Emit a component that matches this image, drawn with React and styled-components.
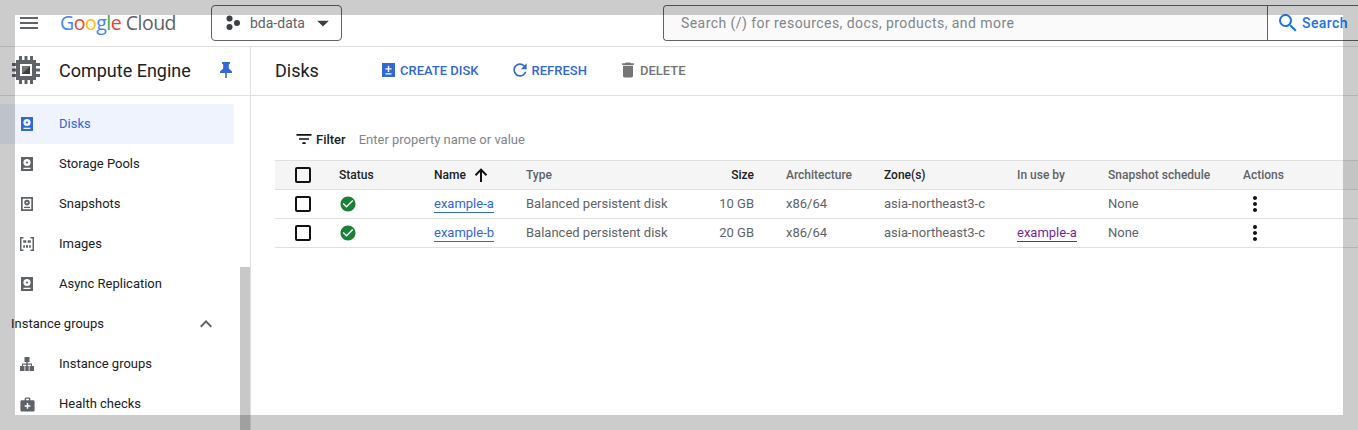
import React from "react"
import styled, { createGlobalStyle } from "styled-components"
import {
  MdMenu, MdRefresh, MdDelete, MdFilterList,
  MdCheckCircle, MdMoreVert, MdSearch, MdArrowDropDown, MdExpandLess, MdMedicalServices,
} from "react-icons/md"

const blue = "#3367d6"
const grey = "#5f6368"
const line = "#e0e0e0"

const Global = createGlobalStyle`
  html, body { margin: 0; background: #fff; height: 430px; overflow: hidden; }
  * { box-sizing: border-box; }
  #root { height: 430px; }
`

const Page = styled.div`
  position: relative;
  width: 1358px;
  height: 430px;
  overflow: hidden;
  font-family: Roboto, "Liberation Sans", sans-serif;
  font-size: 13px;
  color: #202124;
  background: #fff;
`

const Dim = styled.div`
  position: absolute;
  left: 15px;
  top: 15px;
  width: 1328px;
  height: 400px;
  box-shadow: 0 0 0 1400px rgba(0, 0, 0, 0.2);
  pointer-events: none;
`

const Topbar = styled.header`
  height: 47px;
  display: flex;
  align-items: center;
  border-bottom: 1px solid ${line};
  padding-left: 17px;
`

const MenuBtn = styled.div`
  width: 24px;
  height: 24px;
  margin-right: 19px;
  color: ${grey};
  svg { display: block; }
`

const Logo = styled.div`
  width: 151px;
  font-family: "Open Sans", Roboto, sans-serif;
  font-size: 19.5px;
  letter-spacing: -0.5px;
  color: ${grey};
  white-space: nowrap;
  margin-top: -1px;
`

const Letter = styled.span`
  color: ${({ $c }) => $c};
`

const ProjectBtn = styled.div`
  width: 131px;
  height: 36px;
  margin-top: -1px;
  border: 1px solid ${grey};
  border-radius: 4px;
  display: flex;
  align-items: center;
  padding-left: 13px;
  gap: 9px;
  font-size: 14px;
  color: ${grey};
  margin-right: 321px;
`

const SearchBox = styled.div`
  flex: 1;
  height: 36px;
  margin-top: -1px;
  margin-right: -2px;
  display: flex;
  border: 1px solid ${grey};
  border-right: none;
  border-radius: 4px 0 0 4px;
`

const SearchInput = styled.div`
  width: 603px;
  padding-left: 17px;
  line-height: 34px;
  font-size: 14px;
  letter-spacing: 0.44px;
  background: #fafafa;
  color: #80868b;
  border-radius: 4px 0 0 4px;
`

const SearchBtn = styled.div`
  flex: 1;
  display: flex;
  align-items: center;
  gap: 2px;
  padding-left: 8px;
  border-left: 1px solid ${grey};
  color: #1a73e8;
  font-size: 14px;
  font-weight: 500;
  letter-spacing: 0.4px;
`

const Body = styled.div`
  display: flex;
  height: 383px;
`

const Sidebar = styled.aside`
  width: 251px;
  flex-shrink: 0;
  border-right: 1px solid ${line};
  display: flex;
  flex-direction: column;
`

const SideTitle = styled.div`
  height: 49px;
  flex-shrink: 0;
  display: flex;
  align-items: center;
  padding: 0 0 2px 11px;
  border-bottom: 1px solid ${line};
  font-size: 18px;
  color: #202124;
`

const TitleText = styled.span`
  margin-left: 18px;
  width: 161px;
`

const SideBody = styled.div`
  flex: 1;
  display: flex;
  min-height: 0;
`

const NavList = styled.nav`
  width: 240px;
  padding: 8px 6px 0 0;
  overflow: hidden;
`

const NavItem = styled.div`
  height: 40px;
  display: flex;
  align-items: center;
  padding-left: 18px;
  gap: 23px;
  background: ${({ $active }) => ($active ? "#eef3fe" : "transparent")};
  color: ${({ $active }) => ($active ? blue : "#202124")};
`

const IconSlot = styled.span`
  width: 18px;
  display: flex;
  justify-content: center;
  flex-shrink: 0;
  color: ${({ $active }) => ($active ? blue : grey)};
  svg { display: block; }
`

const NavLabel = styled.span`
  padding-bottom: 2px;
`

const GroupHead = styled.div`
  height: 40px;
  display: flex;
  align-items: center;
  justify-content: space-between;
  padding: 0 16px 0 11px;
  color: #202124;
  svg { display: block; color: ${grey}; }
`

const ScrollTrack = styled.div`
  width: 10px;
  padding-top: 171px;
`

const ScrollThumb = styled.div`
  height: 200px;
  background: #c8c8c8;
`

const Main = styled.main`
  flex: 1;
  min-width: 0;
`

const ActionBar = styled.div`
  height: 49px;
  display: flex;
  align-items: center;
  padding: 0 0 2px 24px;
  border-bottom: 1px solid ${line};
`

const PageTitle = styled.h1`
  margin: 0;
  width: 105px;
  font-size: 18px;
  font-weight: 400;
  color: #202124;
`

const ActionBtn = styled.div`
  display: flex;
  align-items: center;
  gap: 2px;
  margin-right: 31px;
  font-size: 13px;
  font-weight: 500;
  color: ${({ $off }) => ($off ? "#757575" : blue)};
  svg { display: block; }
`

const FilterRow = styled.div`
  height: 41px;
  margin-top: 23px;
  padding: 0 0 1px 43px;
  display: flex;
  align-items: center;
  svg { display: block; margin-right: 2px; }
`

const FilterLabel = styled.span`
  font-weight: 500;
  font-size: 13px;
  color: #202124;
  margin-right: 13px;
`

const FilterHint = styled.span`
  font-size: 13px;
  color: #80868b;
`

const Table = styled.div`
  margin-left: 24px;
  border-top: 1px solid ${line};
`

const Row = styled.div`
  display: grid;
  grid-template-columns: 64px 95px 92px 160px 68px 32px 98px 133px 91px 135px 1fr;
  height: 29px;
  align-items: center;
  border-bottom: 1px solid ${line};
  background: ${({ $head }) => ($head ? "#f5f5f5" : "transparent")};
`

const HeadCell = styled.div`
  font-size: 12px;
  font-weight: 500;
  color: ${({ $dark }) => ($dark ? "#202124" : grey)};
  display: flex;
  align-items: center;
  justify-content: ${({ $right }) => ($right ? "flex-end" : "flex-start")};
  gap: 8px;
  svg { display: block; }
`

const Cell = styled.div`
  font-size: 13px;
  color: ${grey};
  padding-bottom: 2px;
  text-align: ${({ $right }) => ($right ? "right" : "left")};
  white-space: nowrap;
`

const IconCell = styled.div`
  svg { display: block; }
`

const Box = styled.div`
  width: 16px;
  height: 16px;
  margin-left: 20px;
  border: 2px solid #111;
  border-radius: 2px;
`

const Link = styled.a`
  color: ${({ $visited }) => ($visited ? "#7b1fa2" : blue)};
  border-bottom: 1px solid currentColor;
  padding-bottom: 1px;
`

const DiskIcon = ({ fill }) => (
  <svg width="12" height="14" viewBox="0 0 12 14">
    <path fill={fill} fillRule="evenodd" d="M0 0h12v14H0zM6 1.9a3.6 3.6 0 1 0 0 7.2 3.6 3.6 0 0 0 0-7.2zM6 4.4a1.1 1.1 0 1 1 0 2.2 1.1 1.1 0 0 1 0-2.2zM2.5 10.8v1.2h7v-1.2z" />
  </svg>
)

const SnapshotIcon = () => (
  <svg width="12" height="14" viewBox="0 0 12 14">
    <path fill={grey} fillRule="evenodd" d="M0 0h12v14H0zM1.7 1.7v10.6h8.6V1.7zM6 2.8a2.8 2.8 0 1 1 0 5.6 2.8 2.8 0 0 1 0-5.6zM6 4.7a.9.9 0 1 0 0 1.8.9.9 0 0 0 0-1.8zM3 9.7h6v1.2H3z" />
  </svg>
)

const ImagesIcon = () => (
  <svg width="14" height="14" viewBox="0 0 14 14" fill={grey}>
    <path d="M0 0h3.5v1.5H1.5v11h2V14H0zM14 0h-3.5v1.5h2v11h-2V14H14z" />
    <path d="M3.2 3.2h3.1v2.6H3.2zM7.7 3.2h3.1v2.6H7.7zM3.2 8.2h1.7v2.6H3.2zM6 8.2h2v2.6H6zM9.1 8.2h1.7v2.6H9.1z" />
  </svg>
)

const GroupIcon = () => (
  <svg width="14" height="14" viewBox="0 0 14 14" fill={grey}>
    <path d="M4.5 0h5v5H7.7v1.6H12V9h2v5H9.5V9H11V7.8H7.7V9h1v5H5.3V9h1V7.8H3V9h1.5v5H0V9h2V6.6h4.3V5H4.5z" />
  </svg>
)

const ChipIcon = () => (
  <svg width="30" height="30" viewBox="0 0 30 30" style={{ display: "block", flexShrink: 0 }}>
    <path fill={grey} fillRule="evenodd" d="M5 5h20v20H5zM9 9v12h12V9z" />
    <path fill={grey} d="M8 1h3v4H8zM13.5 1h3v4h-3zM19 1h3v4h-3zM8 25h3v4H8zM13.5 25h3v4h-3zM19 25h3v4h-3zM1 8h4v3H1zM1 13.5h4v3H1zM1 19h4v3H1zM25 8h4v3h-4zM25 13.5h4v3h-4zM25 19h4v3h-4z" />
    <path fill="#3c4043" d="M11 11h8v8h-8z" />
    <path fill="#757575" d="M11 11h8l-8 8z" />
  </svg>
)

const PinIcon = () => (
  <svg width="12" height="16" viewBox="0 0 12 16" fill={blue} style={{ flexShrink: 0 }}>
    <path d="M2 0h8v1.6L8.8 2.6V6.5L12 9.5V11H6.8v5H5.2v-5H0V9.5L3.2 6.5V2.6L2 1.6z" />
  </svg>
)

const CreateIcon = () => (
  <svg width="18" height="16" viewBox="0 0 18 16">
    <path fill={blue} fillRule="evenodd" d="M2 1h13v14H2zM7.8 3.8v2.4H5.5v1.4h2.3V10h1.4V7.6h2.3V6.2H9.2V3.8zM5.5 11.2v1.4h6v-1.4z" />
  </svg>
)

const SortArrow = () => (
  <svg width="14" height="14" viewBox="0 0 14 14" fill="none" stroke="#111" strokeWidth="2">
    <path d="M7 14V2M1.5 7.2 7 1.6l5.5 5.6" />
  </svg>
)

const NAV = [
  { label: "Disks", icon: <DiskIcon fill={blue} />, active: true },
  { label: "Storage Pools", icon: <DiskIcon fill={grey} /> },
  { label: "Snapshots", icon: <SnapshotIcon /> },
  { label: "Images", icon: <ImagesIcon /> },
  { label: "Async Replication", icon: <DiskIcon fill={grey} /> },
]

const DISKS = [
  { name: "example-a", size: "10 GB", user: "" },
  { name: "example-b", size: "20 GB", user: "example-a" },
]

export default function App() {
  return (
    <Page>
      <Global />
      <Topbar>
        <MenuBtn><MdMenu size={24} /></MenuBtn>
        <Logo>
          <Letter $c="#4285f4">G</Letter>
          <Letter $c="#ea4335">o</Letter>
          <Letter $c="#fbbc05">o</Letter>
          <Letter $c="#4285f4">g</Letter>
          <Letter $c="#34a853">l</Letter>
          <Letter $c="#ea4335">e</Letter> Cloud
        </Logo>
        <ProjectBtn>
          <svg width="16" height="16" viewBox="0 0 16 16" fill="#3c4043">
            <circle cx="4.5" cy="3.5" r="3" />
            <circle cx="4.5" cy="12" r="3" />
            <circle cx="12" cy="8" r="3" />
          </svg>
          bda-data
          <MdArrowDropDown size={28} style={{ marginLeft: -5, color: "#3c4043" }} />
        </ProjectBtn>
        <SearchBox>
          <SearchInput>Search (/) for resources, docs, products, and more</SearchInput>
          <SearchBtn><MdSearch size={24} />Search</SearchBtn>
        </SearchBox>
      </Topbar>
      <Body>
        <Sidebar>
          <SideTitle>
            <ChipIcon />
            <TitleText>Compute Engine</TitleText>
            <PinIcon />
          </SideTitle>
          <SideBody>
            <NavList>
              {NAV.map(n => (
                <NavItem key={n.label} $active={n.active}>
                  <IconSlot $active={n.active}>{n.icon}</IconSlot>
                  <NavLabel>{n.label}</NavLabel>
                </NavItem>
              ))}
              <GroupHead><NavLabel>Instance groups</NavLabel><MdExpandLess size={24} /></GroupHead>
              <NavItem>
                <IconSlot><GroupIcon /></IconSlot>
                <NavLabel>Instance groups</NavLabel>
              </NavItem>
              <NavItem>
                <IconSlot><MdMedicalServices size={17} /></IconSlot>
                <NavLabel>Health checks</NavLabel>
              </NavItem>
            </NavList>
            <ScrollTrack><ScrollThumb /></ScrollTrack>
          </SideBody>
        </Sidebar>
        <Main>
          <ActionBar>
            <PageTitle>Disks</PageTitle>
            <ActionBtn><CreateIcon />CREATE DISK</ActionBtn>
            <ActionBtn><MdRefresh size={20} />REFRESH</ActionBtn>
            <ActionBtn $off><MdDelete size={20} />DELETE</ActionBtn>
          </ActionBar>
          <FilterRow>
            <MdFilterList size={20} color="#111" />
            <FilterLabel>Filter</FilterLabel>
            <FilterHint>Enter property name or value</FilterHint>
          </FilterRow>
          <Table>
            <Row $head>
              <Box />
              <HeadCell $dark>Status</HeadCell>
              <HeadCell $dark>Name<SortArrow /></HeadCell>
              <HeadCell>Type</HeadCell>
              <HeadCell $dark $right>Size</HeadCell>
              <span />
              <HeadCell>Architecture</HeadCell>
              <HeadCell $dark>Zone(s)</HeadCell>
              <HeadCell>In use by</HeadCell>
              <HeadCell>Snapshot schedule</HeadCell>
              <HeadCell>Actions</HeadCell>
            </Row>
            {DISKS.map(d => (
              <Row key={d.name}>
                <Box />
                <IconCell><MdCheckCircle size={18} color="#188038" /></IconCell>
                <Cell><Link>{d.name}</Link></Cell>
                <Cell>Balanced persistent disk</Cell>
                <Cell $right>{d.size}</Cell>
                <span />
                <Cell>x86/64</Cell>
                <Cell>asia-northeast3-c</Cell>
                <Cell>{d.user && <Link $visited>{d.user}</Link>}</Cell>
                <Cell>None</Cell>
                <IconCell><MdMoreVert size={24} color="#111" /></IconCell>
              </Row>
            ))}
          </Table>
        </Main>
      </Body>
      <Dim />
    </Page>
  )
}
